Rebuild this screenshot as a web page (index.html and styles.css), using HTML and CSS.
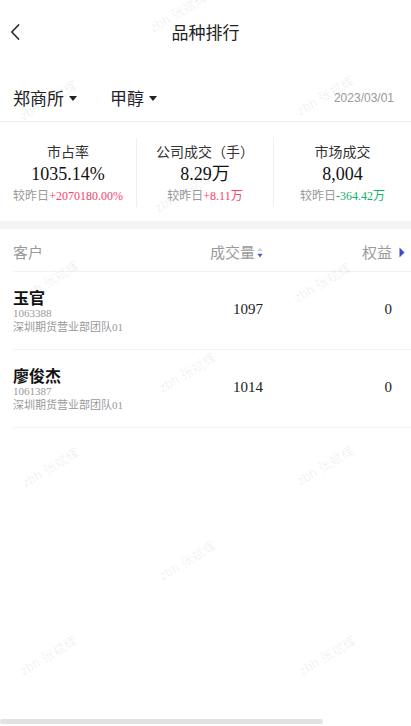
FILE: index.html
```html
<!DOCTYPE html>
<html lang="zh-CN">
<head>
<meta charset="utf-8">
<title>品种排行</title>
<link rel="stylesheet" href="styles.css">
</head>
<body>
<div class="page">
  <header class="nav">
    <svg class="back" width="10" height="16" viewBox="0 0 10 16"><path d="M8.5 1 L1.8 8 L8.5 15" fill="none" stroke="#333" stroke-width="1.8" stroke-linecap="round" stroke-linejoin="round"/></svg>
    <h1 class="title">品种排行</h1>
    <span></span>
  </header>

  <div class="filters">
    <span class="filter">郑商所<i class="caret"></i></span>
    <span class="filter filter-variety">甲醇<i class="caret"></i></span>
    <span class="date">2023/03/01</span>
  </div>

  <section class="stats">
    <div class="stat">
      <div class="stat-label">市占率</div>
      <div class="stat-value">1035.14%</div>
      <div class="stat-cmp">较昨日<span class="up">+2070180.00%</span></div>
    </div>
    <div class="stat">
      <div class="stat-label">公司成交（手）</div>
      <div class="stat-value">8.29万</div>
      <div class="stat-cmp">较昨日<span class="up">+8.11万</span></div>
    </div>
    <div class="stat">
      <div class="stat-label">市场成交</div>
      <div class="stat-value">8,004</div>
      <div class="stat-cmp">较昨日<span class="down">-364.42万</span></div>
    </div>
  </section>

  <div class="band"></div>

  <section class="table">
    <div class="thead grid-row">
      <span class="th">客户</span>
      <span class="th th-num">成交量<svg class="sort" width="6" height="11" viewBox="0 0 6 11"><path d="M3 0.5 L5.6 4.3 L0.4 4.3 Z" fill="#cfcfd6"/><path d="M3 10.5 L5.6 6.7 L0.4 6.7 Z" fill="#4a5bc6"/></svg></span>
      <span class="th th-num">权益</span>
      <svg class="more" width="6" height="11" viewBox="0 0 6 11"><path d="M0.5 0.5 L5.5 5.5 L0.5 10.5 Z" fill="#3d4fc4"/></svg>
    </div>

    <div class="trow grid-row">
      <div class="client">
        <div class="client-name">玉官</div>
        <div class="client-id">1063388</div>
        <div class="client-team">深圳期货营业部团队01</div>
      </div>
      <span class="td-num">1097</span>
      <span class="td-num">0</span>
    </div>

    <div class="trow grid-row">
      <div class="client">
        <div class="client-name">廖俊杰</div>
        <div class="client-id">1061387</div>
        <div class="client-team">深圳期货营业部团队01</div>
      </div>
      <span class="td-num">1014</span>
      <span class="td-num">0</span>
    </div>

    <div class="scrollbar"></div>
  </section>

  <div class="watermarks">
    <span class="wm" style="left:178px;top:12px">zbh 张斌辉</span>
    <span class="wm" style="left:48px;top:100px">zbh 张斌辉</span>
    <span class="wm" style="left:325px;top:95px">zbh 张斌辉</span>
    <span class="wm" style="left:183px;top:192px">zbh 张斌辉</span>
    <span class="wm" style="left:50px;top:280px">zbh 张斌辉</span>
    <span class="wm" style="left:322px;top:282px">zbh 张斌辉</span>
    <span class="wm" style="left:187px;top:372px">zbh 张斌辉</span>
    <span class="wm" style="left:50px;top:467px">zbh 张斌辉</span>
    <span class="wm" style="left:325px;top:465px">zbh 张斌辉</span>
    <span class="wm" style="left:187px;top:560px">zbh 张斌辉</span>
    <span class="wm" style="left:48px;top:655px">zbh 张斌辉</span>
    <span class="wm" style="left:327px;top:655px">zbh 张斌辉</span>
  </div>
</div>
</body>
</html>
```

FILE: styles.css
```css
* { box-sizing: border-box; }

html, body {
  margin: 0;
  padding: 0;
  background: #fff;
}

body {
  font-family: "Liberation Serif", "Noto Sans CJK SC", serif;
  color: #222;
}

.page {
  position: relative;
  height: 726px;
  display: flex;
  flex-direction: column;
  overflow: hidden;
}

/* nav */
.nav {
  height: 64px;
  display: grid;
  grid-template-columns: 40px 1fr 40px;
  align-items: center;
  padding-left: 10px;
}

.back { display: block; }

.title {
  margin: 0;
  text-align: center;
  font-family: "Noto Sans CJK SC", sans-serif;
  font-weight: 400;
  font-size: 17px;
  line-height: 24px;
  color: #222;
  padding-right: 10px;
}

/* filters */
.filters {
  display: flex;
  align-items: center;
  padding: 22px 17px 11px 13px;
  border-bottom: 1px solid #f0f0f0;
}

.filter {
  display: flex;
  align-items: center;
  font-family: "Noto Sans CJK SC", sans-serif;
  font-size: 17px;
  line-height: 24px;
  color: #222;
}

.filter-variety {
  margin-left: 33px;
  color: #2a1f33;
}

.caret {
  display: inline-block;
  width: 0;
  height: 0;
  margin-left: 5px;
  margin-top: 1px;
  border-left: 4px solid transparent;
  border-right: 4px solid transparent;
  border-top: 5px solid #222;
}

.date {
  margin-left: auto;
  font-family: "Liberation Sans", sans-serif;
  font-size: 12px;
  color: #999;
}

/* stats */
.stats {
  display: grid;
  grid-template-columns: 136px 137px 1fr;
  padding: 16px 0 14px;
}

.stat {
  text-align: center;
  padding-top: 1px;
}

.stat + .stat {
  border-left: 1px solid #efefef;
}

.stat-label {
  font-family: "Noto Sans CJK SC", sans-serif;
  font-size: 14px;
  line-height: 24px;
  color: #333;
}

.stat-value {
  font-size: 18px;
  line-height: 22px;
  color: #111;
}

.stat-cmp {
  font-size: 12px;
  line-height: 22px;
  color: #999;
}

.up { color: #f5436b; }
.down { color: #16b06a; }

.band {
  height: 8px;
  background: #f4f4f6;
}

/* table */
.table {
  flex: 1;
  display: flex;
  flex-direction: column;
  padding-left: 13px;
}

.grid-row {
  display: grid;
  grid-template-columns: 170px 80px 129px;
  align-items: center;
  border-bottom: 1px solid #f2f2f2;
}

.thead {
  position: relative;
  height: 43px;
  padding-top: 3px;
}

.th {
  font-family: "Noto Sans CJK SC", sans-serif;
  font-size: 15px;
  line-height: 20px;
  color: #9a9a9a;
}

.th-num {
  display: flex;
  align-items: center;
  justify-content: flex-end;
}

.sort {
  margin-left: 2px;
  margin-top: 1px;
}

.more {
  position: absolute;
  right: 6px;
  top: 18px;
}

.trow {
  padding: 15px 0 14px;
}

.client-name {
  font-family: "Noto Sans CJK SC", sans-serif;
  font-weight: 700;
  font-size: 16px;
  line-height: 20px;
  color: #111;
}

.client-id {
  font-size: 11px;
  line-height: 13px;
  color: #999;
}

.client-team {
  font-size: 11px;
  line-height: 15px;
  color: #999;
}

.td-num {
  text-align: right;
  font-size: 15px;
  color: #222;
  margin-top: -4px;
}

.scrollbar {
  margin-top: auto;
  margin-left: -13px;
  margin-bottom: 2px;
  width: 323px;
  height: 5px;
  border-radius: 3px;
  background: #e2e2e2;
}

/* watermarks */
.watermarks {
  position: absolute;
  inset: 0;
  pointer-events: none;
}

.wm {
  position: absolute;
  transform: translate(-50%, -50%) rotate(-30deg);
  font-family: "Liberation Sans", "Noto Sans CJK SC", sans-serif;
  font-size: 13px;
  white-space: nowrap;
  color: rgba(0, 0, 0, 0.07);
}
```
